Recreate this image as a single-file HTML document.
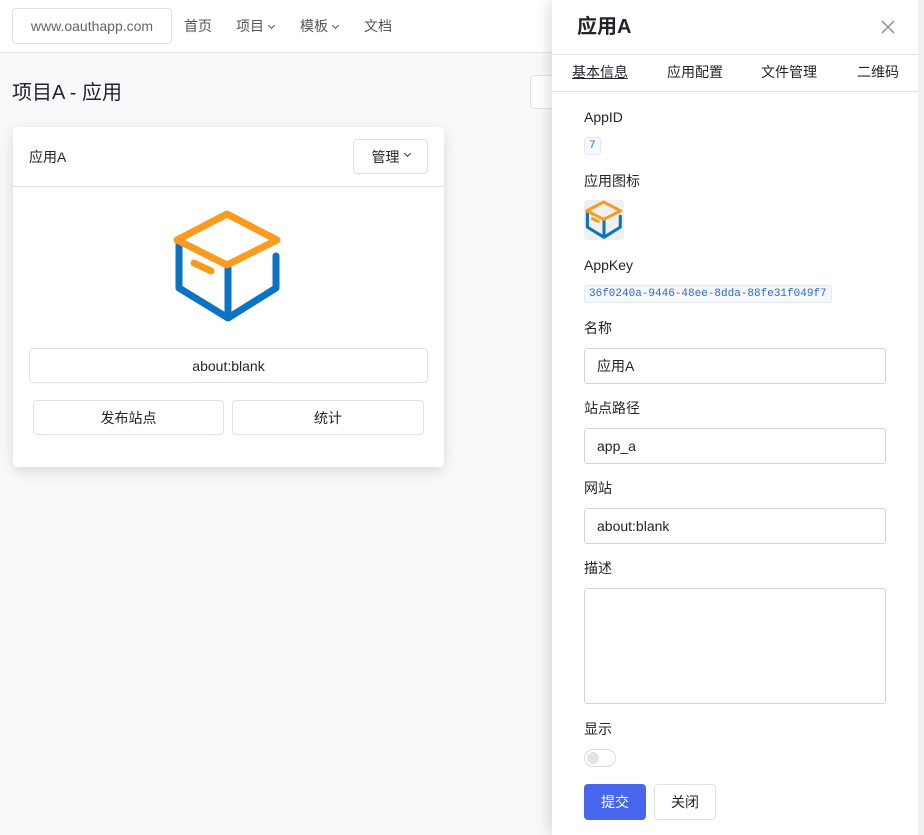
<!DOCTYPE html>
<html><head><meta charset="utf-8"><style>
*{box-sizing:border-box;margin:0;padding:0}
body{width:924px;height:835px;overflow:hidden;background:#f8f9fa;font-family:"Liberation Sans","Noto Sans CJK SC",sans-serif;color:#212529;font-size:14px;position:relative}
.a{position:absolute}
.box{position:absolute;border:1px solid #dee2e6;border-radius:4px;background:#fff;display:flex;align-items:center;justify-content:center}
.inp{position:absolute;left:584px;width:302px;height:36px;border:1px solid #ced4da;border-radius:3px;background:#fff;padding-left:12px;display:flex;align-items:center;font-size:14px}
.lbl{position:absolute;left:584px;font-size:14px;line-height:20px}
.code{position:absolute;left:584px;height:18px;border:1px solid #e3e9f3;background:#f5f8fd;border-radius:3px;color:#2d6bc9;font-family:"Liberation Mono",monospace;font-size:11px;display:flex;align-items:center;padding:0 4px;white-space:nowrap}
.nav{position:absolute;top:16px;font-size:14px;color:#555;line-height:20px}
.car{display:inline-block;width:5px;height:5px;border-right:1px solid #555;border-bottom:1px solid #555;transform:rotate(45deg);margin-left:5px;position:relative;top:-3px}
</style></head><body>
<div class="a" style="left:0;top:0;width:924px;height:53px;background:#fff;border-bottom:1px solid #e5e5e5"></div>
<div class="box" style="left:12px;top:8px;width:160px;height:36px;color:#666;font-size:14px">www.oauthapp.com</div>
<div class="nav" style="left:184px">首页</div>
<div class="nav" style="left:236px">项目<span class="car"></span></div>
<div class="nav" style="left:300px">模板<span class="car"></span></div>
<div class="nav" style="left:364px">文档</div>
<div class="a" style="left:12px;top:80px;font-size:20px;line-height:26px">项目A - 应用</div>
<div class="box" style="left:530px;top:75px;width:40px;height:34px"></div>

<div class="a" style="left:13px;top:127px;width:431px;height:340px;background:#fff;border-radius:4px;box-shadow:0 4px 14px rgba(0,0,0,.13)">
 <div class="a" style="left:0;top:0;width:431px;height:60px;border-bottom:1px solid #e3e3e3"></div>
 <div class="a" style="left:16px;top:20px;font-size:14px">应用A</div>
 <div class="box" style="left:340px;top:12px;width:75px;height:35px">管理<span class="car" style="border-color:#333"></span></div>
 <div class="box" style="left:16px;top:221px;width:399px;height:35px">about:blank</div>
 <div class="box" style="left:20px;top:273px;width:191px;height:35px">发布站点</div>
 <div class="box" style="left:219px;top:273px;width:192px;height:35px">统计</div>
</div>
<svg class="a" style="left:0;top:0" width="460" height="340">
<g fill="none" stroke-width="7" stroke-linecap="round" stroke-linejoin="round">
<path d="M179 244 V288 L228 318 L276 288 V256 M228 268 V318" stroke="#0b72c4"/>
<path d="M227 214 L177 240 L227 265 L277 240 Z M194 263 L211 271" stroke="#fb9b1d"/>
</g></svg>

<div class="a" style="left:552px;top:0;width:366px;height:835px;background:#fff;box-shadow:-4px 0 12px rgba(0,0,0,.12)"></div>
<div class="a" style="left:918px;top:0;width:6px;height:835px;background:#f1f1f1"></div>
<div class="a" style="left:577px;top:14px;font-size:20px;font-weight:bold;line-height:26px">应用A</div>
<svg class="a" style="left:881px;top:20px" width="14" height="14"><path d="M1 1L13 13M13 1L1 13" stroke="#999" stroke-width="1.6"/></svg>
<div class="a" style="left:552px;top:54px;width:366px;height:1px;background:#e3e3e3"></div>
<div class="a" style="left:552px;top:91px;width:366px;height:1px;background:#e3e3e3"></div>
<div class="a" style="left:572px;top:62px;font-size:14px;line-height:20px;text-decoration:underline">基本信息</div>
<div class="a" style="left:667px;top:62px;font-size:14px;line-height:20px">应用配置</div>
<div class="a" style="left:761px;top:62px;font-size:14px;line-height:20px">文件管理</div>
<div class="a" style="left:857px;top:62px;font-size:14px;line-height:20px">二维码</div>

<div class="lbl" style="top:107px">AppID</div>
<div class="code" style="top:137px">7</div>
<div class="lbl" style="top:171px">应用图标</div>
<div class="a" style="left:584px;top:200px;width:40px;height:40px;background:#eef0f2;border-radius:3px"></div>
<svg class="a" style="left:584px;top:200px" width="40" height="40" viewBox="170 208 116 118">
<g fill="none" stroke-width="9" stroke-linecap="round" stroke-linejoin="round">
<path d="M179 244 V288 L228 318 L276 288 V256 M228 268 V318" stroke="#0b72c4"/>
<path d="M227 214 L177 240 L227 265 L277 240 Z M194 263 L211 271" stroke="#fb9b1d"/>
</g></svg>
<div class="lbl" style="top:255px">AppKey</div>
<div class="code" style="top:285px;width:248px">36f0240a-9446-48ee-8dda-88fe31f049f7</div>
<div class="lbl" style="top:318px">名称</div>
<div class="inp" style="top:348px">应用A</div>
<div class="lbl" style="top:398px">站点路径</div>
<div class="inp" style="top:428px">app_a</div>
<div class="lbl" style="top:478px">网站</div>
<div class="inp" style="top:508px">about:blank</div>
<div class="lbl" style="top:558px">描述</div>
<div class="inp" style="top:588px;height:116px"></div>
<div class="lbl" style="top:719px">显示</div>
<div class="a" style="left:584px;top:749px;width:32px;height:18px;border:1px solid #dcdcdc;border-radius:9px;background:#fff"></div>
<div class="a" style="left:587px;top:752px;width:12px;height:12px;border-radius:50%;background:#e3e4e6"></div>
<div class="a" style="left:584px;top:784px;width:62px;height:36px;background:#4766eb;border-radius:4px;color:#fff;display:flex;align-items:center;justify-content:center">提交</div>
<div class="box" style="left:654px;top:784px;width:62px;height:36px">关闭</div>
</body></html>
